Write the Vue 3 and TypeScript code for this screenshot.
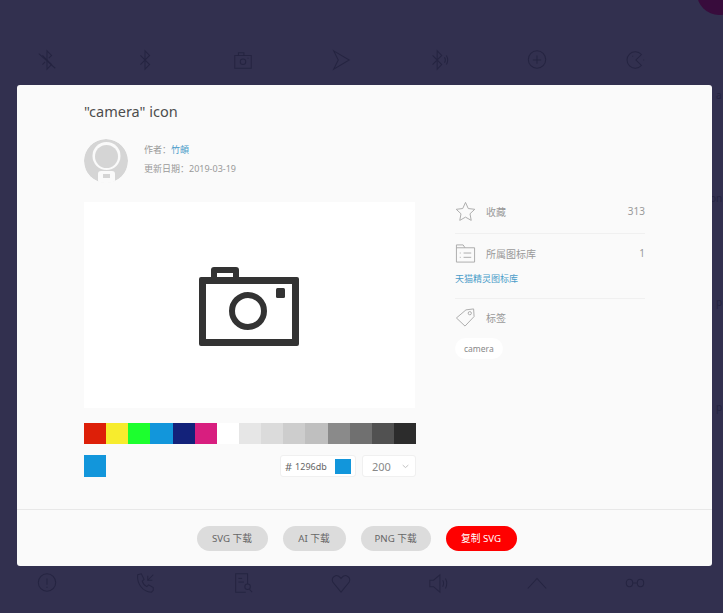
<script setup lang="ts">
const topIcons = [
  ['M7 7l10 10-5 5V12', 'M12 12V2l5 5-3 3', 'M7 17l3-3', 'M3 5l18 16'],
  ['M7 7l10 10-5 5V2l5 5L7 17'],
  ['M3 7h18v14H3z', 'M7 7V4h6v3', 'M12 17a3 3 0 1 0 0-6 3 3 0 0 0 0 6z', 'M17 10h1'],
  ['M4 2l17 10L4 22l5-10z'],
  ['M5 7l10 10-5 5V2l5 5L5 17', 'M18 9q2 3 0 6', 'M20 7q3 5 0 10'],
  ['M12 21a9.500 9.500 0 1 0 0-19 9.500 9.500 0 0 0 0 19z', 'M12 7v9', 'M7.500 12h9'],
  ['M19 6a9 9 0 1 0 0 12l-6-6z', 'M9 8h1', 'M21 12h1'],
]
const bottomIcons = [
  ['M12 21a9.500 9.500 0 1 0 0-19 9.500 9.500 0 0 0 0 19z', 'M12 7v7', 'M12 16v1.500'],
  ['M4 3l4-1 3 6-2 2q1 4 5 6l2-2 5 3v3l-2 2C9 22 3 12 4 3z', 'M21 3l-6 6', 'M15 4v5h5'],
  ['M17 13V2H4v20h11', 'M7 7h4', 'M7 11h6', 'M17 19a3 3 0 1 0 0-6 3 3 0 0 0 0 6z', 'M19 19l3 3'],
  ['M12 22L3 11q-2-5 3-7 3-1 6 3 3-4 6-3 5 2 3 7z'],
  ['M2 9h4l7-6v19l-7-6H2z', 'M16 9q2 3 0 7', 'M19 7q3 5 0 11'],
  ['M2 18L12 7l10 11'],
  ['M6 16a3.500 4 0 1 0 0-8 3.500 4 0 0 0 0 8z', 'M18 16a3.500 4 0 1 0 0-8 3.500 4 0 0 0 0 8z', 'M10 12h4'],
]
const swatches = ['#dd1f08', '#f7ec2d', '#1cff2e', '#1296db', '#13227a', '#d81e7f', '#ffffff', '#e6e6e6', '#dbdbdb', '#cdcdcd', '#bfbfbf', '#8a8a8a', '#707070', '#515151', '#2c2c2c']
// bits of icon names that stick out to the right of the modal
const edgeLabels = [
  { text: 'a', left: 716, top: 88 },
  { text: 'on', left: 710, top: 191 },
  { text: 'p', left: 716, top: 295 },
  { text: 'p', left: 716, top: 400 },
]
</script>

<template>
  <div class="page">
    <span class="corner"></span>
    <div class="icon-row top">
      <svg v-for="(icon, i) in topIcons" :key="i" viewBox="0 0 24 24" class="bg-icon">
        <path v-for="d in icon" :key="d" :d="d" />
      </svg>
    </div>
    <div class="icon-row bottom">
      <svg v-for="(icon, i) in bottomIcons" :key="i" viewBox="0 0 24 24" class="bg-icon">
        <path v-for="d in icon" :key="d" :d="d" />
      </svg>
    </div>
    <span
      v-for="l in edgeLabels"
      :key="l.top"
      class="edge-label"
      :style="{ left: l.left + 'px', top: l.top + 'px' }"
    >{{ l.text }}</span>

    <div class="modal">
      <div class="body">
        <h1 class="title">"camera" icon</h1>
        <div class="author">
          <svg class="avatar" viewBox="0 0 44 44">
            <defs>
              <clipPath id="avatar-clip"><circle cx="22" cy="22" r="22" /></clipPath>
            </defs>
            <g clip-path="url(#avatar-clip)">
              <circle cx="22" cy="22" r="22" fill="#d5d5d5" />
              <circle cx="22.500" cy="17" r="14" fill="#fafafa" />
              <circle cx="22.500" cy="17.500" r="11.500" fill="#d5d5d5" />
              <rect x="14" y="32" width="17" height="12" rx="3" fill="#fafafa" />
              <rect x="19" y="35" width="7" height="4" fill="#d5d5d5" />
              <rect x="0" y="42" width="44" height="3" fill="#fafafa" />
            </g>
          </svg>
          <div class="meta">
            <p>作者：<a class="link">竹頔</a></p>
            <p>更新日期：2019-03-19</p>
          </div>
        </div>

        <div class="columns">
          <div class="left">
            <div class="preview">
              <svg class="camera" viewBox="0 0 100 79">
                <path fill="#333" fill-rule="evenodd" d="M12 10V3q0-3 3-3h22q3 0 3 3v7h58q2 0 2 2v65q0 2-2 2H2q-2 0-2-2V12q0-2 2-2zM18 10h16V6H18zM7 17v55h86V17z" />
                <circle cx="49" cy="44" r="16" fill="none" stroke="#333" stroke-width="6" />
                <rect x="77" y="21" width="9" height="10" rx="1.500" fill="#333" />
              </svg>
            </div>
            <div class="swatches">
              <span v-for="c in swatches" :key="c" class="swatch" :style="{ background: c }"></span>
            </div>
            <div class="controls">
              <span class="current"></span>
              <div class="picker">
                <div class="hex"><b>#</b><span>1296db</span><i></i></div>
                <div class="size">200
                  <svg viewBox="0 0 10 6" class="chev"><path d="M1 1l4 3.500L9 1" /></svg>
                </div>
              </div>
            </div>
          </div>

          <div class="right">
            <div class="stat first">
              <svg class="stat-icon" viewBox="0 0 22 22"><path d="M11 1.500l2.900 6.400 6.800.8-5 4.700 1.300 6.900-6-3.400-6 3.400 1.300-6.900-5-4.700 6.800-.8z" /></svg>
              <span class="label">收藏</span>
              <span class="num">313</span>
            </div>
            <div class="stat lib">
              <svg class="stat-icon" viewBox="0 0 22 22"><path d="M1.500 2h7l2 3h10v15h-19zM1.500 5h9M5 10.500h1M9 10.500h8M5 15h1M9 15h8" /></svg>
              <span class="label">所属图标库</span>
              <span class="num">1</span>
            </div>
            <a class="link lib-link">天猫精灵图标库</a>
            <div class="stat tag-row">
              <svg class="stat-icon" viewBox="0 0 22 22"><path d="M1.500 11.500L11.500 3l8-1 .5 8-9.500 10z" /><circle cx="15.500" cy="6.500" r="1.700" /></svg>
              <span class="label">标签</span>
            </div>
            <span class="tag">camera</span>
          </div>
        </div>
      </div>

      <div class="footer">
        <button class="btn">SVG 下载</button>
        <button class="btn ai">AI 下载</button>
        <button class="btn png">PNG 下载</button>
        <button class="btn primary">复制 SVG</button>
      </div>
    </div>
  </div>
</template>

<style>
html,
body {
  margin: 0;
  background: #32304f;
}
</style>

<style scoped>
.page {
  position: relative;
  height: 613px;
  overflow: hidden;
  background: #32304f;
  font-family: "Noto Sans", "Noto Sans CJK SC", sans-serif;
}
.corner {
  position: absolute;
  left: 697px;
  top: -29px;
  width: 44px;
  height: 44px;
  border-radius: 50%;
  background: #380c3c;
}
.icon-row {
  position: absolute;
  left: 36px;
  display: flex;
  gap: 76px;
}
.top {
  top: 49px;
}
.bottom {
  top: 572px;
}
.bg-icon {
  width: 22px;
  height: 22px;
  fill: none;
  stroke: #252441;
  stroke-width: 1.100;
}
.edge-label {
  position: absolute;
  font-size: 10px;
  line-height: 14px;
  color: #252441;
}
.modal {
  position: absolute;
  left: 17px;
  top: 85px;
  width: 695px;
  height: 481px;
  display: flex;
  flex-direction: column;
  border-radius: 3px;
  background: #fafafa;
}
.body {
  flex: 1;
  padding: 16px 67px 0;
}
.title {
  margin: 0;
  font-size: 14.500px;
  line-height: 21px;
  font-weight: 400;
  color: #4d4d4d;
}
.author {
  display: flex;
  gap: 16px;
  margin-top: 17px;
}
.avatar {
  width: 44px;
  height: 44px;
}
.meta {
  padding-top: 1px;
  font-size: 9px;
  color: #999;
}
.meta p {
  margin: 0;
  line-height: 19px;
}
.link {
  color: #4a9cc9;
}
.columns {
  display: flex;
  justify-content: space-between;
  margin-top: 19px;
}
.left {
  width: 332px;
}
.preview {
  width: 331px;
  height: 206px;
  box-sizing: border-box;
  padding: 3px 1px 0 0;
  display: flex;
  align-items: center;
  justify-content: center;
  background: #fff;
}
.camera {
  width: 100px;
  height: 79px;
}
.swatches {
  display: flex;
  margin-top: 15px;
}
.swatch {
  flex: 1;
  height: 21px;
}
.controls {
  display: flex;
  justify-content: space-between;
  align-items: center;
  margin-top: 11px;
}
.current {
  width: 22px;
  height: 22px;
  background: #1296db;
}
.picker {
  display: flex;
  gap: 6px;
}
.hex,
.size {
  height: 22px;
  display: flex;
  align-items: center;
  box-sizing: border-box;
  border: 1px solid #f0f0f0;
  border-radius: 3px;
  background: #fff;
  color: #666;
}
.hex {
  width: 76px;
  padding-left: 4px;
  white-space: pre;
}
.hex b {
  margin-right: 3px;
  font-size: 11px;
  font-weight: 400;
}
.hex span {
  font-size: 9px;
}
.hex i {
  width: 16px;
  height: 15px;
  margin-left: auto;
  margin-right: 4px;
  background: #1296db;
}
.size {
  width: 54px;
  padding: 0 6px 0 9px;
  justify-content: space-between;
  font-size: 11px;
  color: #888;
}
.chev {
  width: 7px;
  height: 5px;
  fill: none;
  stroke: #aaa;
}
.right {
  width: 190px;
}
.stat {
  display: flex;
  align-items: center;
  height: 20px;
  font-size: 10px;
  color: #999;
}
.first {
  height: 16px;
  margin-top: 1px;
}
.stat-icon {
  width: 21px;
  height: 21px;
  margin-right: 10px;
  flex: none;
  fill: none;
  stroke: #aaa;
  stroke-width: 1;
}
.label {
  flex: 1;
}
.num {
  font-size: 10px;
}
.lib {
  margin-top: 14px;
  padding-top: 9px;
  border-top: 1px solid #f0f0f0;
}
.lib-link {
  display: block;
  margin-top: 9px;
  padding-bottom: 13px;
  border-bottom: 1px solid #f0f0f0;
  font-size: 9px;
  line-height: 13px;
}
.tag-row {
  margin-top: 8px;
}
.tag {
  display: inline-block;
  margin-top: 11px;
  padding: 0 9px;
  border-radius: 11px;
  background: #fff;
  font-size: 8.500px;
  line-height: 21px;
  color: #888;
}
.footer {
  height: 56px;
  display: flex;
  justify-content: center;
  align-items: center;
  gap: 15px;
  padding-right: 16px;
  border-top: 1px solid #e8e8e8;
}
.btn {
  width: 71px;
  height: 25px;
  padding: 0;
  border: 0;
  border-radius: 13px;
  background: #dcdcdc;
  font: 9.700px "Noto Sans", "Noto Sans CJK SC", sans-serif;
  color: #666;
}
.ai {
  width: 63px;
}
.png {
  width: 70px;
}
.primary {
  background: #ff0000;
  color: #fff;
}
</style>
